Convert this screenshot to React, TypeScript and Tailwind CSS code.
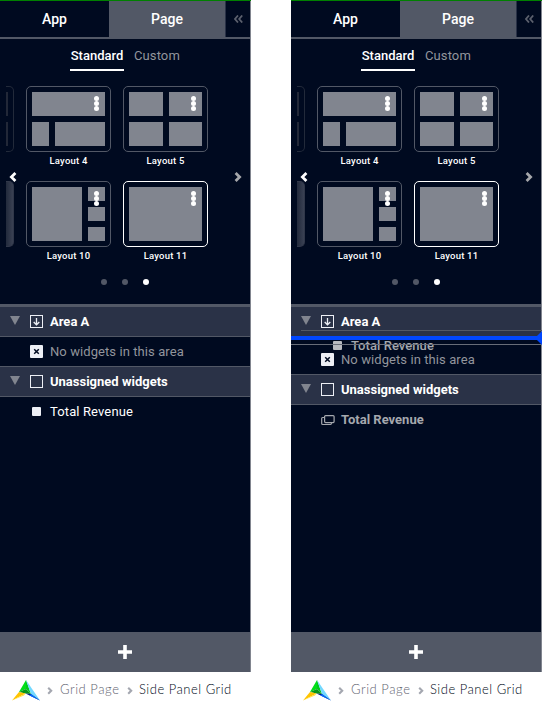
import React from 'react';

const ROBOTO = "font-['Roboto','Liberation_Sans',sans-serif]";

function Chevron({ className, left = false, size = 8 }: { className: string; left?: boolean; size?: number }) {
  return (
    <svg className={className} width={size} height={(size * 10) / 8} viewBox="0 0 8 10" fill="none" stroke="currentColor" strokeWidth="2.8">
      <path d={left ? 'M6.4 1 L2.4 5 L6.4 9' : 'M1.6 1 L5.6 5 L1.6 9'} />
    </svg>
  );
}

function MenuDots() {
  return (
    <span className="absolute top-[9px] right-[11px] flex flex-col">
      <i className="size-[5px] rounded-full bg-white" />
      <i className="size-[5px] rounded-full bg-white" />
      <i className="size-[5px] rounded-full bg-white" />
    </span>
  );
}

function LayoutCard({ label, selected = false, children }: { label: string; selected?: boolean; children: React.ReactNode }) {
  return (
    <div className="w-[85px]">
      <div className={`relative h-[66px] rounded-[5px] border p-[5px] ${selected ? 'border-white' : 'border-[#525866]'}`}>
        {children}
        <MenuDots />
      </div>
      <div className="mt-[3px] text-center text-[9.5px] leading-[12px] font-medium tracking-[0.2px] text-white">{label}</div>
    </div>
  );
}

const TILE = 'bg-[#81858f]';

function Tabs() {
  return (
    <div className="flex h-[38px] border-b-2 border-[#525866] text-[14px] font-medium text-white">
      <div className="flex w-[109px] items-center justify-center">App</div>
      <div className="flex w-[117px] items-center justify-center border-r border-[#2a3247] bg-[#525866] bg-clip-padding">Page</div>
      <div className="flex flex-1 items-center justify-center text-[#5b606d]">
        <svg width="9" height="8" viewBox="0 0 9 8" fill="none" stroke="currentColor" strokeWidth="1.8">
          <path d="M4 .5 L1 4 L4 7.5 M8.2 .5 L5.2 4 L8.2 7.5" />
        </svg>
      </div>
    </div>
  );
}

function LayoutPicker() {
  return (
    <div className="flex h-[265px] flex-col">
      <div className="flex h-[32px] justify-center gap-[10px] pt-[8px] text-[13px] leading-[18px] font-medium">
        <div className="h-[24px] w-[54px] border-b-2 border-white text-center whitespace-nowrap text-white">Standard</div>
        <div className="w-[46px] font-normal tracking-[0.1px] text-[#92959c]">Custom</div>
      </div>
      <div className="mt-[15px] flex h-[176px]">
        <div className="relative w-[26px] pl-[6px]">
          <div className="flex flex-col gap-[29px]">
            <div className="flex h-[66px] w-[8px] flex-col gap-[6px] rounded-r-[5px] border-y border-r border-[#222a3a] py-[5px]">
              <div className="h-6 w-[2px] bg-[#222838]" />
              <div className="h-6 w-[2px] bg-[#222838]" />
            </div>
            <div className="h-[66px] w-[8px] rounded-r-[5px] border-y border-r border-[#303749] bg-linear-to-r from-[#222a3c] to-[#3a4153]" />
          </div>
          <Chevron left className="absolute top-[86px] left-[9px] text-white" />
        </div>
        <div className="grid grid-cols-[85px_85px] content-start gap-x-[12px] gap-y-[14px]">
          <LayoutCard label="Layout 4">
            <div className="flex flex-col gap-[6px]">
              <div className={`h-6 ${TILE}`} />
              <div className="flex gap-[6px]">
                <div className={`h-6 w-[17px] ${TILE}`} />
                <div className={`h-6 flex-1 ${TILE}`} />
              </div>
            </div>
          </LayoutCard>
          <LayoutCard label="Layout 5">
            <div className="grid grid-cols-[34px_33px] gap-[6px]">
              <div className={`h-6 ${TILE}`} />
              <div className={`h-6 ${TILE}`} />
              <div className={`h-6 ${TILE}`} />
              <div className={`h-6 ${TILE}`} />
            </div>
          </LayoutCard>
          <LayoutCard label="Layout 10">
            <div className="flex h-[54px] gap-[6px]">
              <div className={`w-[50px] ${TILE}`} />
              <div className="flex flex-1 flex-col gap-[6px]">
                <div className={`flex-1 ${TILE}`} />
                <div className={`flex-1 ${TILE}`} />
                <div className={`flex-1 ${TILE}`} />
              </div>
            </div>
          </LayoutCard>
          <LayoutCard label="Layout 11" selected>
            <div className={`h-[54px] ${TILE}`} />
          </LayoutCard>
        </div>
        <Chevron className="mt-[86px] ml-[26px] text-[#a5a7ab]" />
      </div>
      <div className="mt-[17px] flex justify-center gap-[15px]">
        <i className="size-[6px] rounded-full bg-[#525866]" />
        <i className="size-[6px] rounded-full bg-[#525866]" />
        <i className="size-[6px] rounded-full bg-white" />
      </div>
    </div>
  );
}

function AreaHeader({ label, arrow = false }: { label: string; arrow?: boolean }) {
  return (
    <div className="flex h-[29px] items-center bg-[#2a3247] pl-[10px] text-[13px] font-bold text-white">
      <svg className="-mt-[2px]" width="10" height="9" viewBox="0 0 10 9">
        <path d="M0 0 H10 L5 9 Z" fill="#81858f" />
      </svg>
      <svg className="mr-[7px] ml-[10px]" width="13" height="13" viewBox="0 0 13 13" fill="none" stroke="#edeff5">
        <rect x=".5" y=".5" width="12" height="12" />
        {arrow && <path d="M6.5 3 V9.5 M3.7 7 L6.5 9.8 L9.3 7" strokeWidth="1.3" />}
      </svg>
      {label}
    </div>
  );
}

function EmptyRow() {
  return (
    <div className="flex h-[29px] items-center pl-[30px] text-[13px] tracking-[0.08px] text-[#92959c]">
      <svg className="mr-[7px]" width="13" height="13" viewBox="0 0 13 13">
        <rect width="13" height="13" rx="1" fill="#edeff5" />
        <path d="M4.2 4.2 L8.8 8.8 M8.8 4.2 L4.2 8.8" stroke="#000a20" strokeWidth="1.5" />
      </svg>
      No widgets in this area
    </div>
  );
}

function WidgetList() {
  return (
    <div className="flex-1 border-t-3 border-[#525866]">
      <AreaHeader label="Area A" arrow />
      <div className="border-y border-[#525866]">
        <EmptyRow />
      </div>
      <AreaHeader label="Unassigned widgets" />
      <div className="flex h-[30px] items-center border-t border-[#525866] pl-[32px] text-[13px] tracking-[0.12px] text-white">
        <i className="mr-[9px] size-[9px] rounded-[1px] bg-[#edeff5]" />
        Total Revenue
      </div>
    </div>
  );
}

function DraggingWidgetList() {
  return (
    <div className="relative flex-1 border-t-3 border-[#525866]">
      <AreaHeader label="Area A" arrow />
      <div className="mt-2 border-y border-[#525866]">
        <EmptyRow />
      </div>
      <AreaHeader label="Unassigned widgets" />
      <div className="flex h-[30px] items-center border-t border-[#525866] pl-[30px] text-[13px] font-bold text-[#a5a8ae]">
        <svg className="mr-[6px]" width="14" height="12" viewBox="0 0 14 12" fill="none" stroke="currentColor" strokeWidth="1.2">
          <rect x="3.6" y="1.6" width="9.5" height="7" rx="1" />
          <path d="M3.5 3.5 H1.5 Q.7 3.5 .7 4.5 V9.5 Q.7 10.5 1.7 10.5 H9.5 Q10.5 10.5 10.5 8.6" />
        </svg>
        Total Revenue
      </div>
      {/* Row carried by the pointer, with the drop marker over it */}
      <div className="absolute top-[23px] right-[-1px] left-[10px] h-[30px] border-t border-[#525866] pl-[32px] text-[13px] leading-[29px] font-medium tracking-[0.06px] text-[#a5a8ae]">
        <span className="flex items-center">
          <i className="mr-[9px] size-[9px] rounded-[1px] bg-[#b9bbc0]" />
          Total Revenue
        </span>
      </div>
      <div className="absolute top-[37px] left-0 h-px w-full bg-[#686d78]" />
      <div className="absolute top-[29px] left-0 h-1 w-full bg-[#0047ff]" />
      <svg className="absolute top-[24px] right-[-1px]" width="7" height="14" viewBox="0 0 7 14">
        <path d="M7 0 L0 7 L7 14 Z" fill="#0047ff" />
      </svg>
    </div>
  );
}

function Logo() {
  return (
    <svg width="28" height="21" viewBox="0 0 28 21">
      <path d="M14 0 L7 12 L14 9 Z" fill="#00df18" />
      <path d="M14 0 L14 9 L19 14 Z" fill="#00c91b" />
      <path d="M14 0 L28 20.5 L19 14 Z" fill="#72d8ff" />
      <path d="M7 12 L14 9 L19 14 L13.5 13.5 Z" fill="#08951b" />
      <path d="M7 12 L13.5 13.5 L0 20.5 Z" fill="#ffc400" />
      <path d="M0 20.5 L13.5 13.5 L12 15.5 Z" fill="#ffe344" />
      <path d="M13.5 13.5 L19 14 L28 20.5 Z" fill="#001c8c" />
      <path d="M19 14 L28 20.5 L17.5 15.6 Z" fill="#006dff" />
    </svg>
  );
}

function Breadcrumbs() {
  return (
    <div className="flex h-[36px] items-center pl-[12px] font-['Lato','Liberation_Sans',sans-serif] text-[13px] font-light whitespace-nowrap">
      <Logo />
      <Chevron className="mt-[2px] mr-[7px] ml-[7px] text-[#a4a7b0]" size={6} />
      <span className="w-[60px] tracking-[0.55px] text-[#5f6471]">Grid Page</span>
      <Chevron className="mt-[2px] mr-[6px] ml-[7px] text-[#a4a7b0]" size={6} />
      <span className="tracking-[0.5px] text-[#000a20]">Side Panel Grid</span>
    </div>
  );
}

function SidePanel({ dragging = false }: { dragging?: boolean }) {
  return (
    <div className={`w-[251px] ${ROBOTO}`}>
      <div className="flex h-[672px] flex-col border-r border-[#81858f] bg-[#000a20]">
        <div className="-mr-px h-px bg-[#008000]" />
        <Tabs />
        <LayoutPicker />
        {dragging ? <DraggingWidgetList /> : <WidgetList />}
        <div className="flex h-[40px] items-center justify-center bg-[#525866]">
          <svg width="14" height="14" viewBox="0 0 14 14">
            <path d="M5.2 0 H8.8 V5.2 H14 V8.8 H8.8 V14 H5.2 V8.8 H0 V5.2 H5.2 Z" fill="#fff" />
          </svg>
        </div>
      </div>
      <Breadcrumbs />
    </div>
  );
}

export default function App() {
  return (
    <div className="flex h-[708px] w-[542px] gap-[40px] overflow-hidden bg-white">
      <SidePanel />
      <SidePanel dragging />
    </div>
  );
}
